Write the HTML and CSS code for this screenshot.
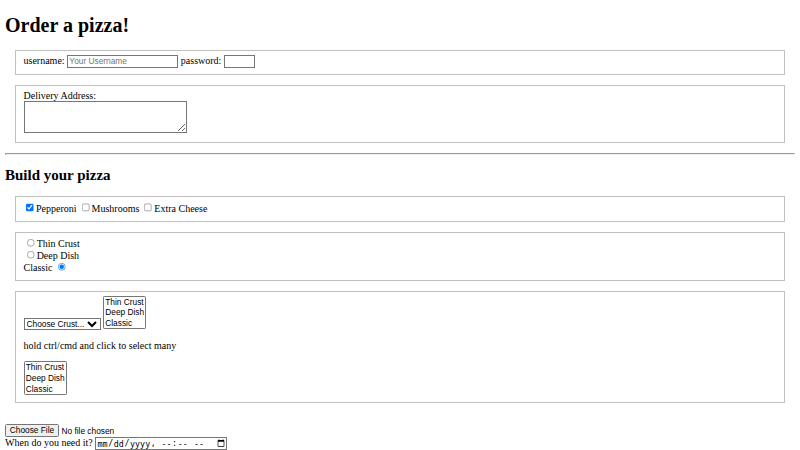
FILE: index.html
```html
<!DOCTYPE html>
<html lang="en">
<head>
<meta charset="utf-8">
<title>Order a pizza!</title>
<link rel="stylesheet" href="styles.css">
</head>
<body class="page">
<h1 class="title">Order a pizza!</h1>
<form class="order">
  <fieldset class="group">
    <label>username: <input class="field user" type="text" placeholder="Your Username"></label>
    <label>password: <input class="field pw" type="password"></label>
  </fieldset>
  <fieldset class="group">
    <label>Delivery Address:<br><textarea class="address"></textarea></label>
  </fieldset>
  <hr class="rule">
  <h2 class="subtitle">Build your pizza</h2>
  <fieldset class="group roomy">
    <label><input class="tick" type="checkbox" checked>Pepperoni</label>
    <label><input class="tick" type="checkbox">Mushrooms</label>
    <label><input class="tick" type="checkbox">Extra Cheese</label>
  </fieldset>
  <fieldset class="group roomy">
    <label><input class="tick" type="radio" name="crust">Thin Crust</label><br>
    <label><input class="tick" type="radio" name="crust">Deep Dish</label><br>
    <label>Classic <input class="tick" type="radio" name="crust" checked></label>
  </fieldset>
  <fieldset class="group">
    <select class="pick">
      <option>Choose Crust...</option>
      <option>Thin Crust</option>
      <option>Deep Dish</option>
      <option>Classic</option>
    </select>
    <select class="pick" size="3">
      <option>Thin Crust</option>
      <option>Deep Dish</option>
      <option>Classic</option>
    </select>
    <p class="hint">hold ctrl/cmd and click to select many</p>
    <select class="pick" multiple size="3">
      <option>Thin Crust</option>
      <option>Deep Dish</option>
      <option>Classic</option>
    </select>
  </fieldset>
  <br>
  <input class="upload" type="file"><br>
  <label>When do you need it? <input class="when" type="datetime-local"></label>
</form>
</body>
</html>
```
FILE: styles.css
```css
html {
  background: #fff;
}
.page {
  zoom: 0.625;
  margin: 0 8px 8px;
  padding-top: 0.1px;
  font-family: "Liberation Serif", "Times New Roman", serif;
  font-size: 16px;
  color: #000;
}
.title {
  font-size: 2em;
  margin: 21.5px 0 22px;
}
.subtitle {
  font-size: 1.5em;
  margin: 0.83em 0;
}
.order {
  margin: 0;
}
.group {
  margin: 16px;
  border: 2px groove #c0c0c0;
  padding: 0.35em 0.75em 0.625em;
}
.roomy {
  padding-top: 6.6px;
  padding-bottom: 11.5px;
}
.field, .pick, .upload, .address {
  font-family: "Liberation Sans", Arial, sans-serif;
  font-size: 13.333px;
}
.user {
  box-sizing: border-box;
  width: 178px;
}
.pw {
  box-sizing: border-box;
  width: 49px;
}
.address {
  box-sizing: border-box;
  width: 261px;
  height: 52px;
}
.when {
  box-sizing: border-box;
  width: 211px;
  font-size: 13.333px;
}
.hint {
  margin: 1em 0;
}
.rule {
  margin: 0.5em 0;
}
```
